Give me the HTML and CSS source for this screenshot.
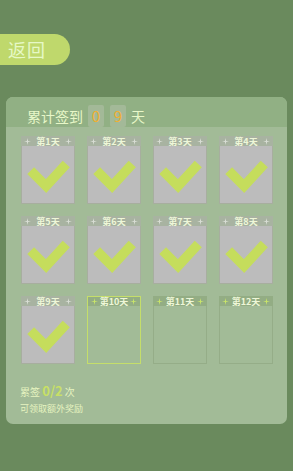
FILE: index.html
```html
<!DOCTYPE html>
<html lang="zh">
<head>
  <meta charset="UTF-8">
  <title>签到</title>
  <link rel="stylesheet" href="styles.css">
</head>
<body>

<div class="back">返回</div>

<div class="panel">
  <div class="panel-head">
    <span>累计签到</span>
    <span class="digit">0</span>
    <span class="digit">9</span>
    <span>天</span>
  </div>

  <div class="grid" id="grid"></div>

  <div class="foot">
    <div class="count">累签 <b>0/2</b> 次</div>
    <div class="hint">可领取额外奖励</div>
  </div>
</div>

<script>
  const grid = document.getElementById("grid");
  const star = '<svg class="star" viewBox="0 0 8 8"><path d="M4 0 L4.7 3.3 L8 4 L4.7 4.7 L4 8 L3.3 4.7 L0 4 L3.3 3.3 Z"/></svg>';
  const check = '<svg class="check" viewBox="0 0 54 58"><polyline points="9,25 25,41 46,18"/></svg>';

  for (let i = 1; i <= 12; i++) {
    let cls = "card";
    if (i <= 9) cls += " done";
    if (i === 10) cls += " today";
    grid.innerHTML += `
      <div class="${cls}">
        <div class="card-head">${star}<span>第${i}天</span>${star}</div>
        <div class="card-body">${i <= 9 ? check : ""}</div>
      </div>`;
  }
</script>

</body>
</html>
```

FILE: styles.css
```css
body {
  margin: 0;
  background: #6a8a5d;
  font-family: "Noto Sans CJK SC", "Noto Sans", sans-serif;
  width: 293px;
  height: 471px;
  overflow: hidden;
}
.back {
  margin-top: 34px;
  width: 62px;
  height: 31px;
  padding-left: 8px;
  background: #bfd86c;
  border-radius: 0 16px 16px 0;
  color: #e6f8c6;
  font-size: 18px;
  line-height: 31px;
  letter-spacing: 1px;
}
.panel {
  margin: 32px 0 0 6px;
  width: 281px;
  height: 327px;
  background: #a2bb97;
  border-radius: 7px;
  overflow: hidden;
  display: flex;
  flex-direction: column;
}
.panel-head {
  height: 30px;
  background: #91b084;
  display: flex;
  align-items: center;
  gap: 5px;
  padding: 7px 0 0 21px;
  box-sizing: border-box;
  color: #e8f7c8;
  font-size: 14px;
}
.panel-head .digit {
  width: 16px;
  height: 22px;
  background: #a3b998;
  border-radius: 2px;
  color: #f0b030;
  font-size: 15px;
  line-height: 22px;
  text-align: center;
}
.panel-head .digit + .digit {
  margin-left: 1px;
}
.grid {
  display: grid;
  grid-template-columns: repeat(4, 54px);
  grid-auto-rows: 68px;
  column-gap: 12px;
  row-gap: 12px;
  padding: 9px 0 0 15px;
}
.card {
  display: flex;
  flex-direction: column;
}
.card-head {
  height: 10px;
  background: #93ad84;
  display: flex;
  align-items: center;
  justify-content: space-between;
  padding: 0 3px;
  color: #eef7d8;
  font-size: 9px;
  font-weight: bold;
}
.star {
  width: 7px;
  height: 7px;
  fill: #c8e46a;
}
.card-body {
  flex: 1;
  border: 1px solid #95ad88;
  border-top: none;
  background: #a2bb97;
}
.card.done .card-head {
  background: #a8b3a1;
}
.card.done .star {
  fill: #d8ddd4;
}
.card.done .card-body {
  background: #bcbcbc;
  border-color: #a7ae9f;
}
.card.today .card-head,
.card.today .card-body {
  border: 1px solid #c5de6a;
}
.card.today .card-head {
  border-bottom: none;
  height: 9px;
}
.card.today .card-body {
  border-top: none;
}
.check {
  display: block;
  width: 100%;
  height: 100%;
}
.check polyline {
  fill: none;
  stroke: #c5dd5c;
  stroke-width: 10;
}
.foot {
  margin-top: auto;
  padding: 0 0 9px 14px;
  color: #e6f4c0;
}
.count {
  font-size: 10px;
}
.count b {
  color: #c8e065;
  font-size: 13px;
  font-weight: bold;
}
.hint {
  margin-top: 2px;
  font-size: 9px;
}
```
